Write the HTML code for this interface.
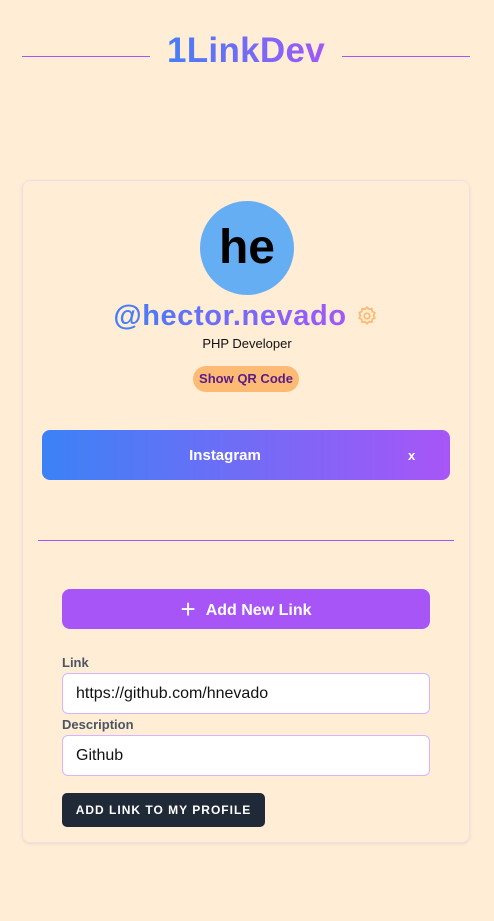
<!DOCTYPE html>
<html><head><style>
*{box-sizing:border-box;margin:0;padding:0}
body{width:494px;height:921px;background:#ffedd5;font-family:"Liberation Sans",sans-serif;position:relative;overflow:hidden}
.abs{position:absolute}
.grad{background:linear-gradient(90deg,#3b82f6,#a855f7);-webkit-background-clip:text;background-clip:text;color:transparent}
.line{height:1px;background:#a855f7}
.card{left:22px;top:180px;width:448px;height:663px;border:1px solid #f3dcea;border-radius:8px;box-shadow:0 1px 3px rgba(0,0,0,.08)}
.input{left:62px;width:368px;height:41px;background:#fff;border:1px solid #d8b4fe;border-radius:6px;font-size:16px;padding:0 13px;line-height:39px;color:#111}
.label{left:62px;font-size:13px;font-weight:bold;color:#4b5563}
</style></head><body>
<div class="abs line" style="left:22px;top:56px;width:128px"></div>
<div class="abs line" style="left:342px;top:56px;width:128px"></div>
<div class="abs grad" style="left:150px;width:192px;top:29px;text-align:center;font-size:35px;font-weight:bold;line-height:44px;letter-spacing:0.3px">1LinkDev</div>
<div class="abs card"></div>
<div class="abs" style="left:200px;top:201px;width:94px;height:94px;border-radius:50%;background:#66aef3;text-align:center;line-height:94px;font-size:48px;font-weight:bold;color:#000">he</div>
<div class="abs grad" style="left:100px;width:260px;top:298px;text-align:center;font-size:29px;font-weight:bold;line-height:36px;letter-spacing:0.6px">@hector.nevado</div>
<svg class="abs" style="left:356px;top:305px" width="22" height="22" viewBox="0 0 24 24" fill="none" stroke="#fdba74" stroke-width="2"><path d="M12 2.5l2.2 2 3-.4.6 3 2.6 1.5-1.2 2.8 1.2 2.8-2.6 1.5-.6 3-3-.4-2.2 2-2.2-2-3 .4-.6-3-2.6-1.5 1.2-2.8-1.2-2.8 2.6-1.5.6-3 3 .4z"/><circle cx="12" cy="12" r="3"/></svg>
<div class="abs" style="left:0;width:494px;top:336px;text-align:center;font-size:13px;color:#111">PHP Developer</div>
<div class="abs" style="left:193px;top:366px;width:106px;height:26px;border-radius:13px;background:#fdba74;color:#581c87;font-weight:bold;font-size:13px;text-align:center;line-height:26px">Show QR Code</div>
<div class="abs" style="left:42px;top:430px;width:408px;height:50px;border-radius:8px;background:linear-gradient(90deg,#3b82f6,#a855f7)"></div>
<div class="abs" style="left:150px;width:150px;top:431px;line-height:50px;text-align:center;color:#fff;font-weight:bold;font-size:15px">Instagram</div>
<div class="abs" style="left:408px;top:431px;line-height:50px;color:#fff;font-weight:bold;font-size:13px">x</div>
<div class="abs line" style="left:38px;top:540px;width:416px"></div>
<div class="abs" style="left:62px;top:589px;width:368px;height:40px;border-radius:8px;background:#a855f7;color:#fff;font-weight:bold;font-size:16px;text-align:center;line-height:40px"><span style="font-weight:normal;font-size:26px;vertical-align:-3px;margin-right:10px">+</span>Add New Link</div>
<div class="abs label" style="top:655px">Link</div>
<div class="abs input" style="top:673px">https://github.com/hnevado</div>
<div class="abs label" style="top:717px">Description</div>
<div class="abs input" style="top:735px">Github</div>
<div class="abs" style="left:62px;top:793px;width:203px;height:34px;border-radius:5px;background:#1f2937;color:#fff;font-weight:bold;font-size:12px;letter-spacing:1px;text-align:center;line-height:34px">ADD LINK TO MY PROFILE</div>
</body></html>
